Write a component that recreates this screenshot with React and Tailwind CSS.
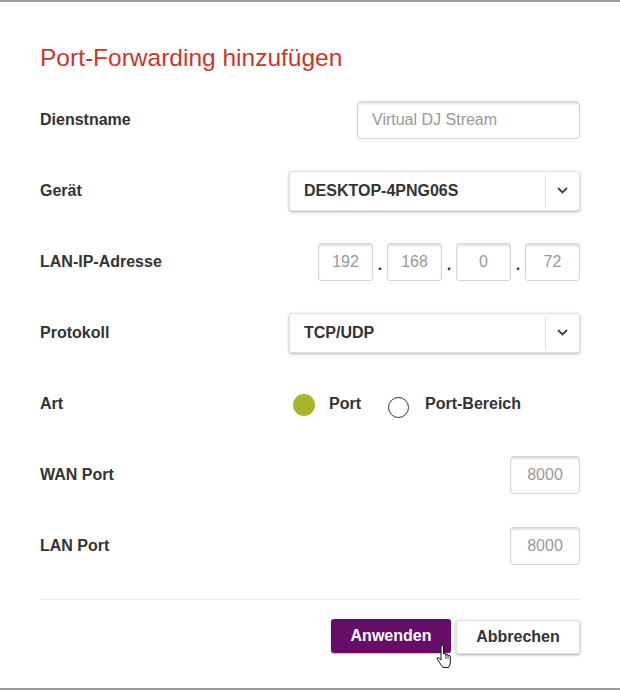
import React from "react";

const inputCls =
  "h-[38px] rounded-[3px] border border-[#d6d6d6] bg-white text-[16px] text-[#999] shadow-[inset_0_2px_2px_rgba(0,0,0,0.12)] flex items-center";

function Chevron() {
  return (
    <svg width="11" height="7" viewBox="0 0 11 7" fill="none">
      <path d="M1 1l4.5 4.5L10 1" stroke="#444" strokeWidth="1.8" />
    </svg>
  );
}

function SelectBox({ value }) {
  return (
    <div className="w-[291px] h-[40px] rounded-[3px] border border-[#e2e2e2] bg-white shadow-[0_1px_3px_rgba(0,0,0,0.3)] flex items-center">
      <div className="flex-1 pl-[14px] text-[16px] font-bold text-[#333]">{value}</div>
      <div className="w-px h-[32px] bg-[#ddd]" />
      <div className="w-[33px] flex justify-center">
        <Chevron />
      </div>
    </div>
  );
}

function Row({ label, children }) {
  return (
    <div className="h-[71px] flex items-center justify-between">
      <div className="text-[16px] font-bold text-[#333]">{label}</div>
      <div className="w-[291px] flex justify-end">{children}</div>
    </div>
  );
}

function HandCursor() {
  return (
    <svg width="18" height="25" viewBox="0 0 18 25" className="absolute left-[105px] top-[25px]">
      <path
        d="M5 2 Q6.25 0.5 7.5 2 V10 Q8.6 8.8 9.8 10 V11 Q10.9 9.8 12 11 V12 Q13.1 10.8 14.3 12 V18 Q14.3 21 12.5 23.5 H7 Q5.5 21.5 3.5 18.5 L1.3 15 Q0.8 13.3 2.4 13.6 L5 16 Z"
        fill="white"
        stroke="#111"
        strokeWidth="1"
        strokeLinejoin="round"
      />
      <path d="M9.8 11 V15 M12 12 V15" stroke="#111" strokeWidth="0.8" />
    </svg>
  );
}

export default function App() {
  return (
    <div className="w-[620px] h-[690px] bg-white border-t-2 border-b-2 border-[#9a9a9a] font-['Liberation_Sans',Arial,sans-serif]">
      <div className="px-10 pt-10">
        <h1 className="h-[32px] leading-[32px] text-[24.5px] text-[#c8372b] mb-[10px]">Port-Forwarding hinzufügen</h1>

        <Row label="Dienstname">
          <div className={`${inputCls} w-[223px] pl-[14px]`}>Virtual DJ Stream</div>
        </Row>

        <Row label="Gerät">
          <SelectBox value="DESKTOP-4PNG06S" />
        </Row>

        <Row label="LAN-IP-Adresse">
          <div className="flex items-center">
            {["192", "168", "0", "72"].map((v, i) => (
              <React.Fragment key={i}>
                {i > 0 && <span className="w-[14px] text-center text-[16px] text-[#333] font-bold translate-y-[3px]">.</span>}
                <div className={`${inputCls} w-[55px] justify-center`}>{v}</div>
              </React.Fragment>
            ))}
          </div>
        </Row>

        <Row label="Protokoll">
          <SelectBox value="TCP/UDP" />
        </Row>

        <div className="h-[71px] flex items-center">
          <div className="w-[249px] text-[16px] font-bold text-[#333]">Art</div>
          <div className="flex items-center">
            <span className="w-[22px] h-[22px] rounded-full bg-[#a9b42a] ml-[4px] translate-y-[1px]" />
            <span className="ml-[14px] text-[16px] font-bold text-[#333]">Port</span>
            <span className="ml-[27px] w-[21px] h-[21px] rounded-full border border-[#333] bg-white translate-y-[4px]" />
            <span className="ml-[16px] text-[16px] font-bold text-[#333]">Port-Bereich</span>
          </div>
        </div>

        <Row label="WAN Port">
          <div className={`${inputCls} w-[70px] justify-center`}>8000</div>
        </Row>

        <Row label="LAN Port">
          <div className={`${inputCls} w-[70px] justify-center`}>8000</div>
        </Row>

        <div className="mt-[18px] h-px bg-[#ebebeb]" />

        <div className="pt-[19px] flex justify-end gap-[5px]">
          <div className="relative">
            <button className="w-[120px] h-[34px] rounded-[3px] bg-[#660e67] text-white text-[16px] font-bold shadow-[0_1px_2px_rgba(0,0,0,0.3)]">
              Anwenden
            </button>
            <HandCursor />
          </div>
          <button className="w-[124px] h-[34px] mt-px rounded-[3px] border border-[#e2e2e2] bg-white text-[#333] text-[16px] font-bold shadow-[0_1px_3px_rgba(0,0,0,0.35)]">
            Abbrechen
          </button>
        </div>
      </div>
    </div>
  );
}
